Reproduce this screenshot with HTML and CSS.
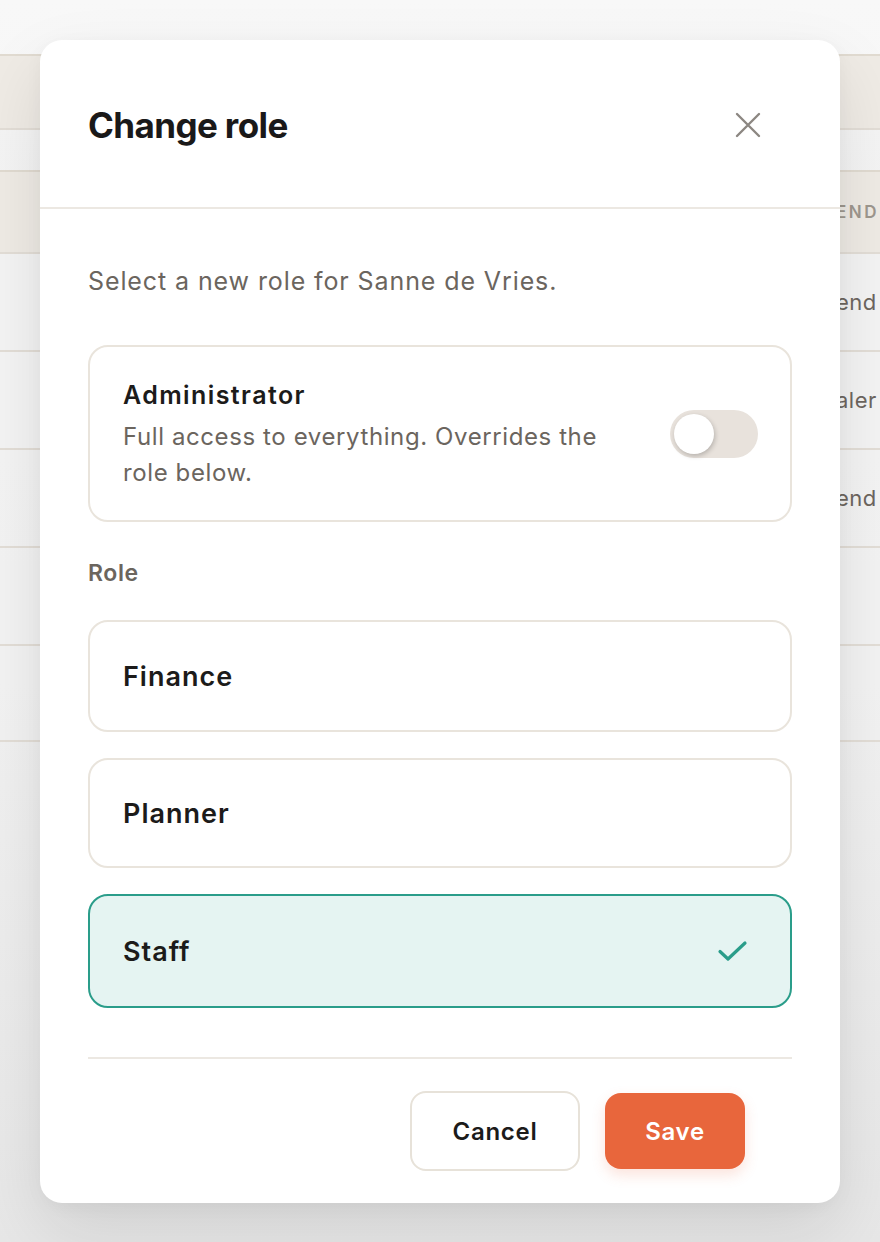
FILE: index.html
```html
<!DOCTYPE html>
<html lang="en">
<head>
<meta charset="utf-8">
<title>Change role</title>
<link rel="stylesheet" href="styles.css">
</head>
<body>
<div class="page">
  <div class="bg-table">
    <div class="bg-top"></div>
    <div class="bg-band bg-band-a"></div>
    <div class="bg-row bg-row-thin"></div>
    <div class="bg-band bg-band-b"><span class="bg-head">END</span></div>
    <div class="bg-row"><span class="bg-cell">end</span></div>
    <div class="bg-row"><span class="bg-cell">aler</span></div>
    <div class="bg-row"><span class="bg-cell">end</span></div>
    <div class="bg-row"></div>
    <div class="bg-row"></div>
  </div>

  <div class="overlay">
    <div class="modal" role="dialog" aria-labelledby="modal-title">
      <div class="modal-header">
        <h2 id="modal-title" class="modal-title">Change role</h2>
        <button class="close-btn" aria-label="Close">
          <svg width="26" height="26" viewBox="0 0 26 26" fill="none" stroke="#8c8782" stroke-width="2.4" stroke-linecap="round">
            <path d="M2 2 L24 24 M24 2 L2 24"/>
          </svg>
        </button>
      </div>
      <div class="modal-body">
        <p class="intro">Select a new role for Sanne de Vries.</p>
        <div class="admin-card">
          <div class="admin-text">
            <div class="admin-title">Administrator</div>
            <div class="admin-desc">Full access to everything. Overrides the role below.</div>
          </div>
          <div class="toggle"><div class="knob"></div></div>
        </div>
        <div class="role-label">Role</div>
        <div class="role-list">
          <div class="role-option">Finance</div>
          <div class="role-option role-short">Planner</div>
          <div class="role-option selected">
            <span>Staff</span>
            <svg class="check" width="32" height="24" viewBox="0 0 32 24" fill="none" stroke="#2a9d8a" stroke-width="3.2" stroke-linecap="round" stroke-linejoin="round">
              <path d="M3 12.5 L11 20 L28 4"/>
            </svg>
          </div>
        </div>
        <div class="footer">
          <button class="btn btn-cancel">Cancel</button>
          <button class="btn btn-save">Save</button>
        </div>
      </div>
    </div>
  </div>
</div>
</body>
</html>
```

FILE: styles.css
```css
* { box-sizing: border-box; }
html, body { margin: 0; padding: 0; }
body {
  width: 880px;
  height: 1242px;
  overflow: hidden;
  background: #ebebeb;
  font-family: "Inter", "Liberation Sans", sans-serif;
  color: #1c1b1a;
}
.page {
  position: relative;
  width: 880px;
  height: 1242px;
  background: linear-gradient(180deg, #f8f8f8 0%, #f2f2f2 55%, #e7e7e7 100%);
}
.bg-table { display: flex; flex-direction: column; }
.bg-top { height: 54px; }
.bg-band {
  background: #efebe5;
  border-top: 2px solid #e1dbd1;
  display: flex;
  align-items: center;
}
.bg-band-a { height: 74px; }
.bg-band-b { height: 82px; }
.bg-row {
  height: 98px;
  border-top: 2px solid #e3ded7;
  background: rgba(244,244,244,0.6);
  display: flex;
  align-items: center;
}
.bg-row-thin { height: 42px; }
.bg-row:last-child { border-bottom: 2px solid #e3ded7; }
.bg-head {
  padding-left: 836px;
  font-size: 17px;
  letter-spacing: 2.5px;
  color: #9e978e;
  font-weight: 600;
  white-space: nowrap;
}
.bg-cell {
  padding-left: 836px;
  font-size: 22px;
  letter-spacing: 0.5px;
  color: #6d665f;
  white-space: nowrap;
}
.overlay {
  position: absolute;
  inset: 0;
}
.modal {
  position: absolute;
  left: 40px;
  top: 40px;
  width: 800px;
  height: 1163px;
  background: #ffffff;
  border-radius: 22px;
  box-shadow: 0 30px 70px rgba(0,0,0,0.10), 0 4px 18px rgba(0,0,0,0.04);
  display: flex;
  flex-direction: column;
}
.modal-header {
  height: 169px;
  border-bottom: 2px solid #ece8e2;
  display: flex;
  align-items: center;
  justify-content: space-between;
  padding: 2px 79px 0 48px;
}
.modal-title {
  margin: 0;
  font-size: 35px;
  font-weight: 700;
  letter-spacing: -0.6px;
  color: #1a1919;
}
.close-btn {
  background: none;
  border: none;
  padding: 0;
  width: 26px;
  height: 26px;
  display: flex;
  cursor: pointer;
}
.modal-body {
  padding: 0 48px;
  display: flex;
  flex-direction: column;
}
.intro {
  margin: 54px 0 0;
  font-size: 25px;
  letter-spacing: 0.9px;
  line-height: 36px;
  color: #6b655e;
}
.admin-card {
  margin-top: 46px;
  border: 2px solid #e9e4dc;
  border-radius: 20px;
  padding: 31px 32px 30px 33px;
  display: flex;
  align-items: center;
  justify-content: space-between;
  gap: 40px;
  height: 177px;
}
.admin-title {
  font-size: 25px;
  font-weight: 600;
  letter-spacing: 1.4px;
  line-height: 36px;
  color: #1c1b1a;
}
.admin-desc {
  margin-top: 6px;
  font-size: 24px;
  letter-spacing: 0.6px;
  line-height: 36px;
  color: #6b655e;
  max-width: 500px;
}
.toggle {
  flex: 0 0 auto;
  width: 88px;
  height: 48px;
  border-radius: 24px;
  background: #e8e2dc;
  padding: 4px;
}
.knob {
  width: 40px;
  height: 40px;
  border-radius: 50%;
  background: #ffffff;
  box-shadow: 1px 2px 5px rgba(0,0,0,0.22);
}
.role-label {
  margin-top: 36px;
  font-size: 23px;
  font-weight: 600;
  letter-spacing: 0.6px;
  line-height: 30px;
  color: #6b655e;
}
.role-list {
  margin-top: 32px;
  display: flex;
  flex-direction: column;
  gap: 26px;
}
.role-option {
  height: 112px;
  border: 2px solid #e9e4dc;
  border-radius: 20px;
  padding: 0 41px 0 33px;
  display: flex;
  align-items: center;
  justify-content: space-between;
  font-size: 27px;
  font-weight: 600;
  letter-spacing: 1px;
  color: #1c1b1a;
}
.role-option.role-short { height: 110px; }
.role-option.selected {
  height: 114px;
  border-color: #2a9d8a;
  background: #e5f4f2;
}
.check { display: block; }
.footer {
  margin-top: 49px;
  border-top: 2px solid #ece8e2;
  padding: 32px 47px 0 0;
  display: flex;
  justify-content: flex-end;
  align-items: center;
  gap: 25px;
}
.btn {
  font-family: "Inter", "Liberation Sans", sans-serif;
  font-size: 24px;
  font-weight: 600;
  letter-spacing: 0.7px;
  border-radius: 16px;
  cursor: pointer;
}
.btn-cancel {
  width: 170px;
  height: 80px;
  background: #ffffff;
  border: 2px solid #e7e2d9;
  color: #1c1b1a;
}
.btn-save {
  width: 140px;
  height: 76px;
  background: #e8663c;
  border: none;
  color: #ffffff;
  box-shadow: 0 6px 14px rgba(232,102,60,0.18);
}
```
